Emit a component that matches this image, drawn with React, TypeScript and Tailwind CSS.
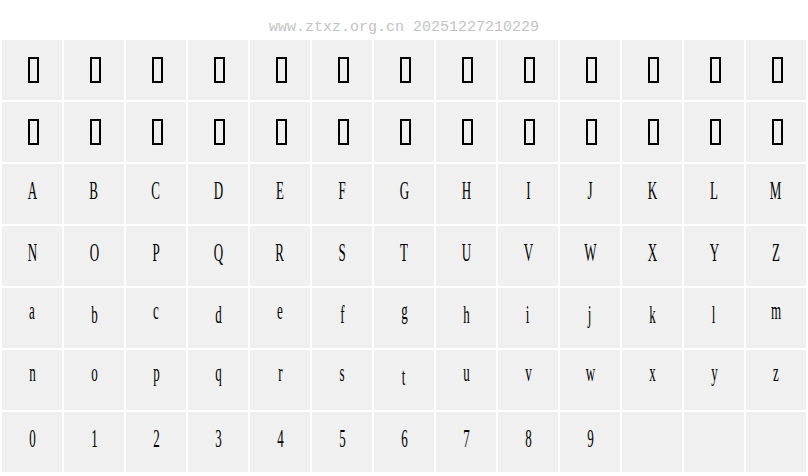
const missing = Array.from({ length: 26 }, () => "");

const chars = [
  ..."ABCDEFGHIJKLMNOPQRSTUVWXYZ",
  ..."abcdefghijklmnopqrstuvwxyz",
  ..."0123456789",
  "",
  "",
  "",
];

const raised = "acegmnopqrsuvwxyz";

function Tofu() {
  return (
    <div className="flex h-[60px] justify-center bg-[#f0f0f0] pt-[17px]">
      <span className="ml-[2px] block h-[26px] w-[11px] border-2 border-black" />
    </div>
  );
}

function Glyph({ ch }: { ch: string }) {
  return (
    <div className="flex h-[60px] justify-center bg-[#f0f0f0] pt-[14px]">
      {ch && (
        <span
          className={
            raised.includes(ch)
              ? "inline-block scale-x-[0.5] -translate-y-[4px] font-['Liberation_Serif',serif] text-[26px] leading-[26px] text-black"
              : "inline-block scale-x-[0.5] font-['Liberation_Serif',serif] text-[26px] leading-[26px] text-black"
          }
        >
          {ch}
        </span>
      )}
    </div>
  );
}

export default function App() {
  return (
    <div className="h-[476px] w-[808px] overflow-hidden bg-white">
      <div className="h-[40px] pt-[19px] text-center font-['Liberation_Mono',monospace] text-[15px] leading-[18px] text-[#c4c4c4]">
        www.ztxz.org.cn 20251227210229
      </div>
      <div className="grid grid-cols-[repeat(13,60px)] gap-[2px] px-[2px]">
        {missing.map((_, i) => (
          <Tofu key={"t" + i} />
        ))}
        {chars.map((ch, i) => (
          <Glyph key={"g" + i} ch={ch} />
        ))}
      </div>
    </div>
  );
}
